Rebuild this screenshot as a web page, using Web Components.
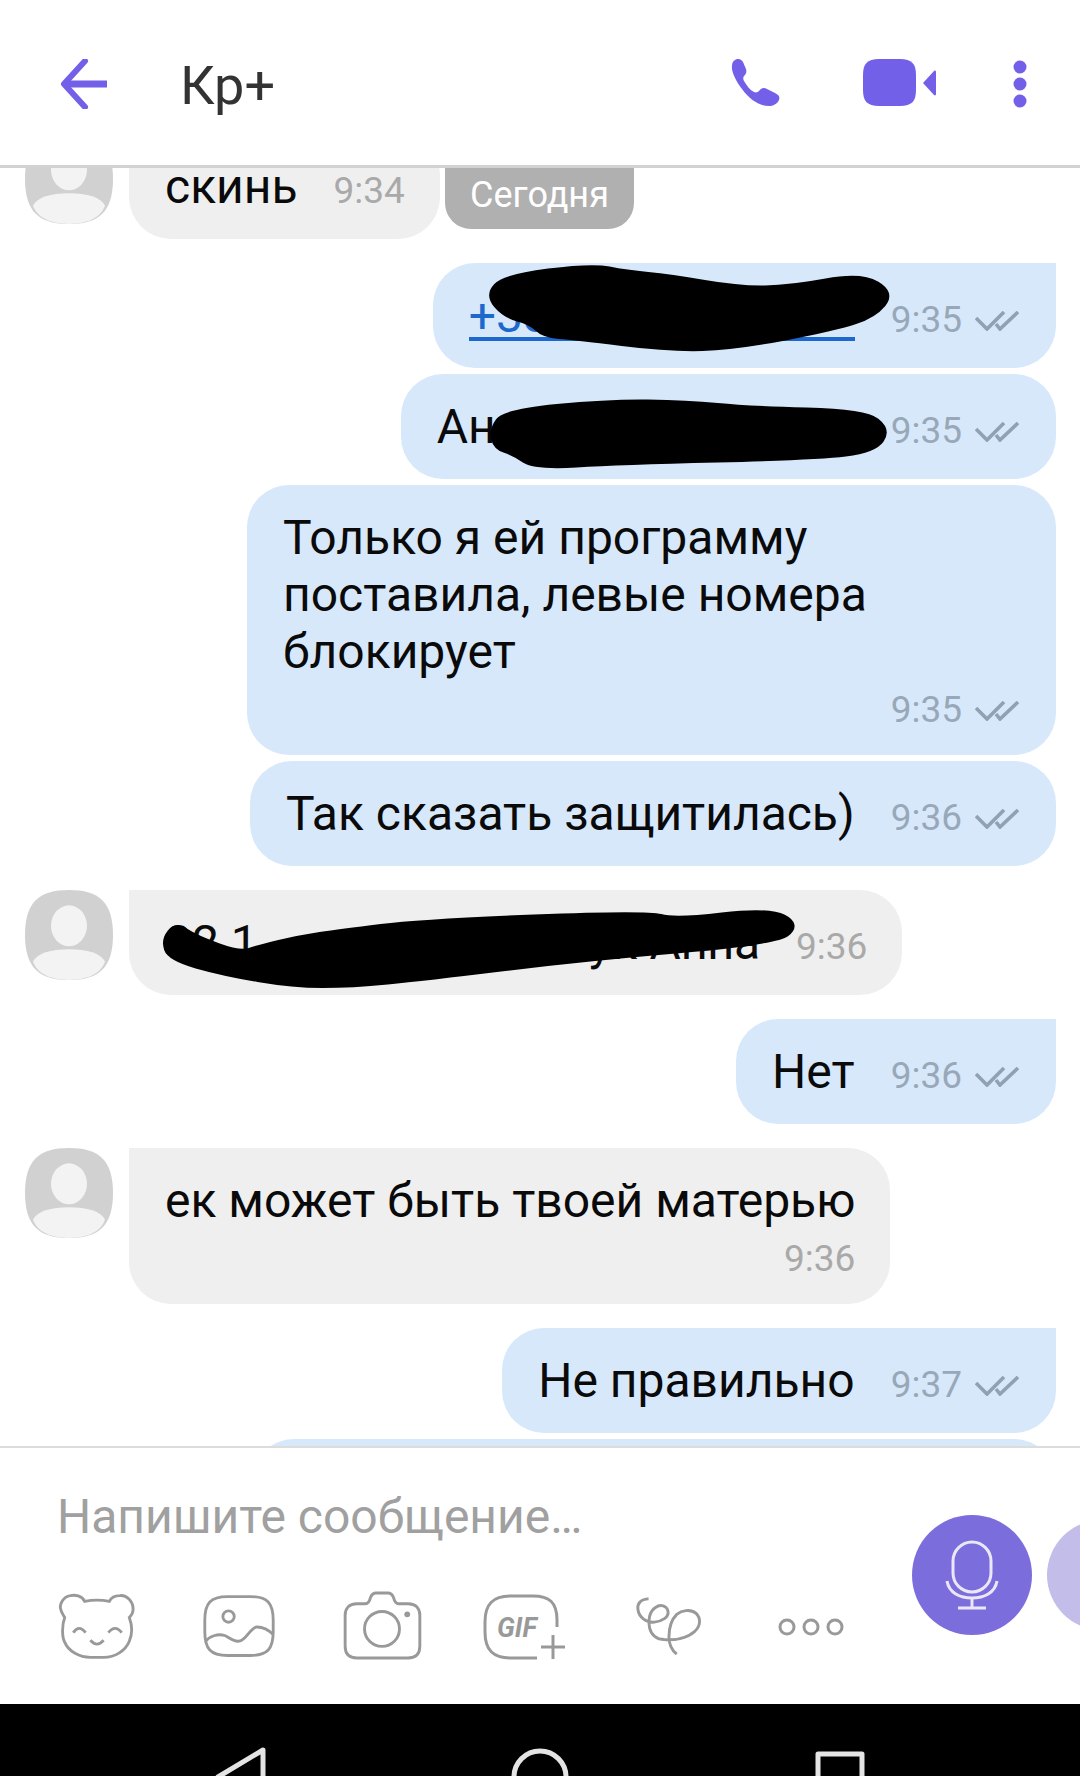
<!DOCTYPE html>
<html lang="ru">
<head>
<meta charset="utf-8">
<title>Кр+</title>
<style>
  html, body { margin: 0; padding: 0; background: #fff; }
  body { font-family: Roboto, "Noto Sans", sans-serif; }
</style>
</head>
<body>
<chat-screen>
  <chat-header slot="header" title="Кр+"></chat-header>

  <date-pill slot="messages">Сегодня</date-pill>

  <chat-msg slot="messages" side="in" first time="9:34" style="margin-top:-34px">
    <chat-avatar slot="avatar"></chat-avatar>
    скинь
  </chat-msg>

  <chat-msg slot="messages" side="out" first time="9:35">
    <span style="display:block;width:386px;color:#1c68cc;height:50px;line-height:57px;border-bottom:4px solid #1c68cc;margin-bottom:3px">+38</span>
    <scribble-mark slot="over" ox="432" oy="263" points="487,295 504,277 591,266 625,273 669,277 738,289 790,288 860,275 891,293 873,315 834,328 734,347 669,349 573,337 543,335 530,322 504,315"></scribble-mark>
  </chat-msg>

  <chat-msg slot="messages" side="out" time="9:35">
    <span style="display:block;width:418px">Ан</span>
    <scribble-mark slot="over" ox="400" oy="374" points="491,430 504,412 608,402 686,403 747,409 864,412 887,430 873,450 816,457 617,462 534,467 513,453 495,447"></scribble-mark>
  </chat-msg>

  <chat-msg slot="messages" side="out" stacked time="9:35" style="--bubble-width:809px">
    Только я ей программу<br>поставила, левые номера<br>блокирует
  </chat-msg>

  <chat-msg slot="messages" side="out" time="9:36">Так сказать защитилась)</chat-msg>

  <chat-msg slot="messages" side="in" first time="9:36">
    <chat-avatar slot="avatar"></chat-avatar>
    <span style="display:flex;justify-content:space-between;width:595px"><span>02 1</span><span>ук Anna</span></span>
    <scribble-mark slot="over" ox="129" oy="890" points="164,940 176,925 196,938 240,954 258,948 300,938 340,932 422,922 646,913 675,921 769,910 798,925 775,942 587,958 423,978 352,985 293,985 223,973 170,958"></scribble-mark>
  </chat-msg>

  <chat-msg slot="messages" side="out" first time="9:36">Нет</chat-msg>

  <chat-msg slot="messages" side="in" first stacked time="9:36">
    <chat-avatar slot="avatar"></chat-avatar>
    ек может быть твоей матерью
  </chat-msg>

  <chat-msg slot="messages" side="out" first time="9:37">Не правильно</chat-msg>

  <chat-msg slot="messages" side="out" cut></chat-msg>

  <chat-composer slot="composer"></chat-composer>
  <nav-bar slot="nav"></nav-bar>
</chat-screen>

<script>
class ChatScreen extends HTMLElement {
  constructor() {
    super();
    this.attachShadow({ mode: 'open' });
    this.shadowRoot.innerHTML = `
      <style>
        :host {
          display: flex;
          flex-direction: column;
          width: 1080px;
          height: 1776px;
          overflow: hidden;
          background: #fff;
        }
        #messages {
          position: relative;
          flex: 1;
          min-height: 0;
          display: flex;
          flex-direction: column;
          overflow: hidden;
        }
      </style>
      <slot name="header"></slot>
      <div id="messages"><slot name="messages"></slot></div>
      <slot name="composer"></slot>
      <slot name="nav"></slot>
    `;
  }
}

class ChatHeader extends HTMLElement {
  constructor() {
    super();
    this.attachShadow({ mode: 'open' });
    this.shadowRoot.innerHTML = `
      <style>
        :host {
          display: flex;
          flex: none;
          align-items: center;
          height: 165px;
          border-bottom: 3px solid #d2d2d2;
          background: #fff;
          position: relative;
          z-index: 2;
        }
        svg { display: block; flex: none; }
        #back { margin: 3px 0 0 60px; }
        h1 {
          margin: 6px 0 0 71px;
          flex: 1;
          font: 400 54px/60px Roboto, sans-serif;
          color: #333;
        }
        #phone { margin-right: 83px; }
        #video { margin-right: 77px; }
        #dots { margin: 2px 53px 0 0; }
      </style>
      <svg id="back" width="49" height="50" viewBox="0 0 49 50" fill="none" stroke="#7360e8">
        <path d="M47 25 H5" stroke-width="7"/>
        <path d="M25 2 L4 25 L25 48" stroke-width="6" stroke-linecap="round" stroke-linejoin="round"/>
      </svg>
      <h1></h1>
      <svg id="phone" width="49" height="47" viewBox="0 0 49 47" fill="#7360e8">
        <path d="M4 1 C7 -1 10 0 12 3 L15 10 C16 13 15 15 13 17 C12 18 12 20 13 22 C16 27 19 31 23 33 C25 34 27 33 28 32 C30 29 33 28 36 30 L44 34 C48 36 49 38 48 41 C46 45 42 47 38 47 C28 47 18 40 11 30 C5 22 0 12 1 7 C1 4 2 2 4 1Z"/>
      </svg>
      <svg id="video" width="73" height="47" viewBox="0 0 73 47" fill="#7360e8">
        <path d="M16 0 H37 C49 0 53 5 53 16 V31 C53 42 49 47 37 47 H16 C4 47 0 42 0 31 V16 C0 5 4 0 16 0Z"/>
        <path d="M60 24 L71 12 C72 11 73 12 73 13 V35 C73 36 72 37 71 36Z"/>
      </svg>
      <svg id="dots" width="14" height="48" viewBox="0 0 14 48" fill="#7360e8">
        <circle cx="7" cy="7" r="6.5"/><circle cx="7" cy="24" r="6.5"/><circle cx="7" cy="41" r="6.5"/>
      </svg>
    `;
  }

  connectedCallback() {
    this.shadowRoot.querySelector('h1').textContent = this.getAttribute('title');
  }
}

class DatePill extends HTMLElement {
  constructor() {
    super();
    this.attachShadow({ mode: 'open' });
    this.shadowRoot.innerHTML = `
      <style>
        :host {
          position: absolute;
          top: -4px;
          left: 445px;
          z-index: 1;
          box-sizing: border-box;
          width: 189px;
          height: 65px;
          padding-top: 2px;
          text-align: center;
          background: #b0b0b0;
          color: #fff;
          font: 400 36px/58px Roboto, sans-serif;
          border-radius: 0 0 26px 26px;
        }
      </style>
      <slot></slot>
    `;
  }
}

class ChatAvatar extends HTMLElement {
  constructor() {
    super();
    this.attachShadow({ mode: 'open' });
    this.shadowRoot.innerHTML = `
      <style>
        :host { display: block; width: 88px; height: 90px; }
        svg { display: block; }
      </style>
      <svg width="88" height="90" viewBox="0 0 88 88" preserveAspectRatio="none">
        <path fill="#d1d1d1" d="M44 0 C74 0 88 12 88 44 C88 76 74 88 44 88 C14 88 0 76 0 44 C0 12 14 0 44 0Z"/>
        <ellipse cx="44" cy="35" rx="18" ry="20" fill="#f3f3f3"/>
        <path fill="#f3f3f3" d="M8 70 C12 62 26 58 44 58 C62 58 76 62 80 70 C76 82 62 88 44 88 C26 88 12 82 8 70Z"/>
      </svg>
    `;
  }
}

class ScribbleMark extends HTMLElement {
  constructor() {
    super();
    this.attachShadow({ mode: 'open' });
    this.shadowRoot.innerHTML = `
      <style>
        :host { position: absolute; left: 0; top: 0; width: 1px; height: 1px; }
        svg { display: block; overflow: visible; }
      </style>
      <svg width="1" height="1"><path fill="#000" stroke="#000" stroke-width="6" stroke-linejoin="round"/></svg>
    `;
  }

  connectedCallback() {
    const ox = Number(this.getAttribute('ox'));
    const oy = Number(this.getAttribute('oy'));
    const pts = this.getAttribute('points').trim().split(/\s+/).map(p => {
      const [x, y] = p.split(',').map(Number);
      return [x - ox, y - oy];
    });
    // rounded outline: each point is a control point, midpoints are on the curve
    const mid = (a, b) => [(a[0] + b[0]) / 2, (a[1] + b[1]) / 2];
    const start = mid(pts[pts.length - 1], pts[0]);
    let d = `M${start[0]} ${start[1]}`;
    pts.forEach((p, i) => {
      const m = mid(p, pts[(i + 1) % pts.length]);
      d += ` Q${p[0]} ${p[1]} ${m[0]} ${m[1]}`;
    });
    this.shadowRoot.querySelector('path').setAttribute('d', d + 'Z');
  }
}

const TICKS = `
  <svg width="44" height="20" viewBox="0 0 44 20" fill="none" stroke="#8fa1b2" stroke-width="3.6">
    <path d="M1 7 L12 18 L29 1"/>
    <path d="M21 13 L25 18 L43 1"/>
  </svg>`;

class ChatMsg extends HTMLElement {
  constructor() {
    super();
    this.attachShadow({ mode: 'open' });
    this.shadowRoot.innerHTML = `
      <style>
        :host {
          display: flex;
          flex: none;
          align-items: flex-start;
          margin-top: 6px;
          padding: 0 24px 0 25px;
          color: #0a0a0a;
          font: 400 48px/57px Roboto, sans-serif;
        }
        :host([first]) { margin-top: 24px; }
        :host([side="out"]) { justify-content: flex-end; }

        ::slotted([slot="avatar"]) { flex: none; margin-right: 16px; }

        #bubble {
          position: relative;
          box-sizing: border-box;
          width: var(--bubble-width, auto);
          display: flex;
          align-items: baseline;
          gap: 36px;
          padding: 24px 35px 24px 36px;
          border-radius: 42px;
          background: #efefef;
        }
        :host([side="out"]) #bubble { background: #d7e8fb; padding-right: 37px; }
        :host([side="in"][first]) #bubble { border-top-left-radius: 0; }
        :host([side="out"][first]) #bubble { border-top-right-radius: 0; }
        :host([stacked]) #bubble {
          flex-direction: column;
          align-items: stretch;
          gap: 0;
          padding-bottom: 25px;
        }
        :host([cut]) #bubble { width: 804px; height: 104px; }

        #text { white-space: nowrap; }
        #meta {
          display: flex;
          align-items: center;
          justify-content: flex-end;
          gap: 13px;
          font-size: 37px;
          line-height: 40px;
          color: #a9a9a9;
          white-space: nowrap;
        }
        :host([side="out"]) #meta { color: #98a8b8; }
        :host([stacked]) #meta { margin-top: 10px; }
        #meta svg { display: block; margin-top: 1px; }
      </style>
      <slot name="avatar"></slot>
      <div id="bubble">
        <div id="text"><slot></slot></div>
        <div id="meta"></div>
        <slot name="over"></slot>
      </div>
    `;
  }

  connectedCallback() {
    const meta = this.shadowRoot.querySelector('#meta');
    if (!this.hasAttribute('time')) {
      meta.remove();
      return;
    }
    meta.innerHTML = `<span>${this.getAttribute('time')}</span>` +
      (this.getAttribute('side') === 'out' ? TICKS : '');
  }
}

class ChatComposer extends HTMLElement {
  constructor() {
    super();
    this.attachShadow({ mode: 'open' });
    this.shadowRoot.innerHTML = `
      <style>
        :host {
          display: flex;
          flex: none;
          align-items: flex-start;
          height: 256px;
          border-top: 2px solid #dcdcdc;
          background: #fff;
          overflow: hidden;
          position: relative;
          z-index: 2;
        }
        #left { flex: none; width: 912px; padding-top: 40px; }
        #placeholder {
          margin-left: 57px;
          font: 400 48px/57px Roboto, sans-serif;
          color: #a0a0a0;
          white-space: nowrap;
        }
        #tools {
          display: grid;
          grid-template-columns: repeat(6, 143px);
          justify-items: center;
          margin: 45px 0 0 24px;
        }
        #tools svg { display: block; overflow: visible; }
        #tools text {
          font: italic 700 27px Roboto, sans-serif;
          fill: #999;
          stroke: none;
        }
        #mic, #send {
          flex: none;
          margin-top: 67px;
          border-radius: 50%;
        }
        #mic { width: 120px; height: 120px; background: #7b6ddb; }
        #mic svg { display: block; }
        #send {
          width: 110px;
          height: 110px;
          margin-top: 72px;
          margin-left: 15px;
          background: #c3bdea;
        }
      </style>
      <div id="left">
        <div id="placeholder">Напишите сообщение…</div>
        <div id="tools">
          <svg width="84" height="72" viewBox="0 0 84 72" fill="none" stroke="#999" stroke-width="3">
            <g transform="translate(43 36) scale(.95) translate(-43 -36)">
              <path d="M30 10 C27 4 20 3 15 4 C7 5 3 14 5 19 C6 23 8 25 9 27 C6 35 6 48 9 53 C13 63 25 69 36 69 H50 C62 69 73 62 77 52 C80 45 80 35 77 27 C79 25 81 22 81 18 C81 10 74 3 67 4 C62 4 58 6 56 10 C48 8.500 38 8.500 30 10Z"/>
              <path d="M18 43 Q24 34 31 43"/>
              <path d="M55 43 Q62 34 69 43"/>
              <path d="M36 51 Q43 59 50 51"/>
            </g>
          </svg>
          <svg width="84" height="72" viewBox="0 0 84 72" fill="none" stroke="#999" stroke-width="3">
            <g transform="translate(42 36) scale(.95) translate(-42 -36)">
              <path d="M30 5 H54 C72 5 78 12 78 30 V42 C78 60 72 67 54 67 H30 C12 67 6 60 6 42 V30 C6 12 12 5 30 5Z"/>
              <circle cx="31" cy="26" r="6"/>
              <path d="M7 52 C12 46 20 44 27 46 C32 48 36 53 42 52 C50 51 53 38 61 37 C67 37 73 40 78 45"/>
            </g>
          </svg>
          <svg width="84" height="72" viewBox="0 0 84 72" fill="none" stroke="#999" stroke-width="3">
            <g transform="translate(42 36) scale(.97) translate(-42 -36)">
              <path d="M16 13 H25 C28 13 29 11 30 7 C31 4 33 2 36 2 H48 C51 2 53 4 54 7 C55 11 56 13 59 13 H69 C77 13 81 18 81 25 V57 C81 65 77 69 69 69 H16 C8 69 4 65 4 57 V25 C4 18 8 13 16 13Z"/>
              <circle cx="42" cy="39" r="18"/>
              <circle cx="68" cy="24" r="3" fill="#999" stroke="none"/>
            </g>
          </svg>
          <svg width="84" height="72" viewBox="0 0 84 72" fill="none" stroke="#999" stroke-width="3">
            <path d="M74 37 V30 C74 12 66 6 50 6 H28 C10 6 2 14 2 32 V42 C2 60 10 68 28 68 H54"/>
            <path d="M58 57 H82 M70 45 V69"/>
            <text x="14" y="47">GIF</text>
          </svg>
          <svg width="84" height="72" viewBox="0 0 84 72" fill="none" stroke="#999" stroke-width="3">
            <g transform="translate(42 36) scale(.97) translate(-42 -36)">
              <path d="M22 8 C14 8 10 13 11 19 C12 27 20 33 28 32 C36 31 43 27 42 21 C41 15 34 13 29 17 C23 21 21 30 23 38 C25 46 31 50 38 50 C50 51 62 48 69 42 C76 36 76 28 71 23 C65 18 56 20 51 24 C45 30 43 40 43 47 C43 55 46 61 51 65"/>
            </g>
          </svg>
          <svg width="84" height="72" viewBox="0 0 84 72" fill="none" stroke="#999" stroke-width="3">
            <circle cx="18" cy="37" r="7"/><circle cx="42" cy="37" r="7"/><circle cx="66" cy="37" r="7"/>
          </svg>
        </div>
      </div>
      <div id="mic">
        <svg width="120" height="120" viewBox="0 0 120 120" fill="none" stroke="#e9e7f8" stroke-width="3">
          <rect x="41" y="27" width="38" height="50" rx="19"/>
          <path d="M35 66 C37 78 48 83 60 83 C72 83 83 78 85 66"/>
          <path d="M60 83 V93 M46 93 H74"/>
        </svg>
      </div>
      <div id="send"></div>
    `;
  }
}

class NavBar extends HTMLElement {
  constructor() {
    super();
    this.attachShadow({ mode: 'open' });
    this.shadowRoot.innerHTML = `
      <style>
        :host {
          display: flex;
          flex: none;
          justify-content: center;
          box-sizing: border-box;
          height: 72px;
          padding-top: 43px;
          background: #000;
          overflow: hidden;
        }
        div { width: 300px; display: flex; justify-content: center; }
        svg { display: block; flex: none; }
      </style>
      <div><svg width="54" height="60" viewBox="0 0 54 60" fill="none" stroke="#e4e4e4" stroke-width="5" stroke-linejoin="round"><path d="M50 3 L5 30 L50 57Z"/></svg></div>
      <div><svg width="58" height="60" viewBox="0 0 58 60" fill="none" stroke="#e4e4e4" stroke-width="5"><circle cx="29" cy="30" r="26"/></svg></div>
      <div><svg width="50" height="60" viewBox="0 0 50 60" fill="none" stroke="#e4e4e4" stroke-width="5" stroke-linejoin="round"><rect x="3" y="7" width="44" height="44"/></svg></div>
    `;
  }
}

customElements.define('chat-screen', ChatScreen);
customElements.define('chat-header', ChatHeader);
customElements.define('date-pill', DatePill);
customElements.define('chat-avatar', ChatAvatar);
customElements.define('scribble-mark', ScribbleMark);
customElements.define('chat-msg', ChatMsg);
customElements.define('chat-composer', ChatComposer);
customElements.define('nav-bar', NavBar);
</script>
</body>
</html>
